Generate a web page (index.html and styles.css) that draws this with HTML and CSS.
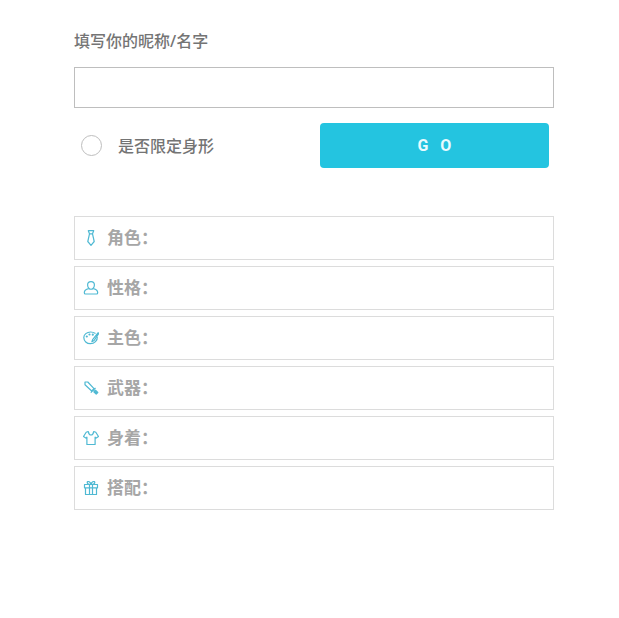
FILE: index.html
```html
<!DOCTYPE html>
<html lang="zh-CN">

<head>
    <meta charset="UTF-8">
    <meta name="viewport" content="width=device-width, initial-scale=1.0">
    <title>填写你的昵称/名字</title>
    <link rel="stylesheet" href="styles.css">
</head>

<body>
    <div class="main">
        <form class="form">
            <label class="name-label" for="name">填写你的昵称/名字</label>
            <input class="name-input" id="name" type="text">

            <div class="options">
                <div class="limit">
                    <input class="limit-check" id="limit" type="checkbox">
                    <label for="limit">是否限定身形</label>
                </div>
                <button class="go" type="button">G O</button>
            </div>
        </form>

        <ul class="result">
            <li>
                <!-- tie -->
                <svg class="icon" viewBox="0 0 16 16">
                    <path d="M5.300.7h5.400L9.500 3.800h-3zM6.500 3.800 4.800 11.500 8 15.300l3.200-3.800L9.500 3.800" />
                </svg>
                <span>角色：</span>
            </li>
            <li>
                <!-- person -->
                <svg class="icon" viewBox="0 0 16 16">
                    <path d="M6 8.500C5 7.500 4.600 6.300 4.600 5a3.400 3.400 0 0 1 6.800 0c0 1.300-.4 2.500-1.400 3.500-1 1-3 1-4 0z" />
                    <path d="M5.700 8.600C3 9.200 1.300 10.500 1.300 12.700c0 .9.400 1.300 1.200 1.300h11c.8 0 1.200-.4 1.200-1.300 0-2.200-1.700-3.500-4.400-4.100" />
                </svg>
                <span>性格：</span>
            </li>
            <li>
                <!-- palette and brush -->
                <svg class="icon" viewBox="0 0 16 16">
                    <path d="M12.500 3.500C11 2.500 9.500 2 7.600 2 3.800 2 .8 4.600.8 7.500c0 3.600 3 6.200 6.500 6.200 4.200 0 7.300-3.100 7-7" />
                    <path d="M15.200 2.700 9.800 9.300l-.9 2.400 2.200-1.200 4.500-6.800z" />
                    <circle cx="3.800" cy="6.500" r=".5" />
                    <circle cx="6.500" cy="4.500" r=".5" />
                    <circle cx="9.800" cy="4.700" r=".5" />
                </svg>
                <span>主色：</span>
            </li>
            <li>
                <!-- sword -->
                <svg class="icon" viewBox="0 0 16 16">
                    <path d="M2 2h2.800l6.200 6.700-2.300 2.300L2 4.800zM12.500 8l-4.700 4.700M11 10.500l3.200 3.200M12.200 9.800l2.600 2.700-1.600 1.600-2.700-2.600" />
                </svg>
                <span>武器：</span>
            </li>
            <li>
                <!-- shirt -->
                <svg class="icon" viewBox="0 0 16 16">
                    <path d="M5.200 1.500C5.600 3.300 6.600 5 8 5s2.400-1.700 2.800-3.500l2 .8 2.700 4.200-2.700 1.700-.7-1v7.300H3.900V7.200l-.7 1L.5 6.500l2.700-4.200z" />
                </svg>
                <span>身着：</span>
            </li>
            <li>
                <!-- gift -->
                <svg class="icon" viewBox="0 0 16 16">
                    <path d="M1.500 4.500h13v3.300h-13zM2.500 7.800h11v6.700h-11zM6.500 4.500v10M9.500 4.500v10M8 4.500C6.500 4.500 4.200 4 4.200 2.600 4.200.8 7.500 1 8 4.500c.5-3.500 3.800-3.700 3.800-1.900C11.800 4 9.500 4.500 8 4.500z" />
                </svg>
                <span>搭配：</span>
            </li>
        </ul>
    </div>
</body>

</html>
```

FILE: styles.css
```css
* {
    box-sizing: border-box;
}

body {
    margin: 0;
    background-color: white;
    color: #747474;
    font-family: "Noto Sans", "Noto Sans CJK SC", sans-serif;
    font-size: 16px;
    font-weight: 500;
    line-height: 24px;
}

.main {
    margin: 0 65px 0 74px;
    padding: 29px 0;
}

.name-label {
    display: block;
}

.name-input {
    display: block;
    width: 100%;
    height: 41px;
    margin-top: 14px;
    padding: 0 10px;
    border: 1px solid #bebebe;
    background-color: white;
    font: inherit;
    color: inherit;
}

.options {
    display: flex;
    align-items: center;
    margin-top: 15px;
    padding: 0 5px 0 7px;
}

.limit {
    display: flex;
    flex: 1;
    align-items: center;
    gap: 16px;
}

.limit-check {
    appearance: none;
    width: 21px;
    height: 21px;
    margin: 0;
    border: 1px solid #bebebe;
    border-radius: 50%;
}

.limit-check:checked {
    background-color: #24c4e0;
}

.go {
    width: 49%;
    height: 45px;
    padding: 0 0 0 4px;
    border: none;
    border-radius: 4px;
    background-color: #24c4e0;
    color: #e9fbff;
    font-family: Roboto, sans-serif;
    font-size: 16px;
    font-weight: bold;
    letter-spacing: 4px;
}

.go:hover {
    background-color: #1fb2cc;
}

.result {
    display: grid;
    gap: 6px;
    margin: 48px 0 0;
    padding: 0;
    list-style: none;
    color: #a6a6a6;
    font-size: 17px;
    font-weight: bold;
}

.result li {
    display: flex;
    align-items: center;
    gap: 8px;
    height: 44px;
    padding: 0 8px 1px;
    border: 1px solid #dcdcdc;
}

.icon {
    width: 16px;
    height: 16px;
    fill: none;
    stroke: #4fb9d3;
    stroke-width: 1.2;
    stroke-linejoin: round;
}
```
